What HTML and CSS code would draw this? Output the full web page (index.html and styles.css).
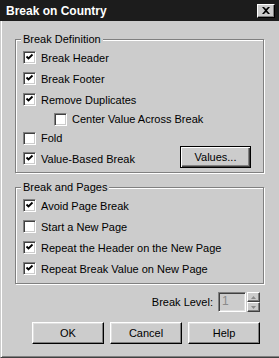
FILE: index.html
```html
<!DOCTYPE html>
<html lang="en">
<head>
    <meta charset="UTF-8">
    <title>Break on Country</title>
    <link rel="stylesheet" href="styles.css">
</head>
<body>
    <!-- Dialog window -->
    <div class="window">
        <div class="titlebar">
            <span class="title">Break on Country</span>
            <span class="close-btn">
                <svg width="8" height="7" viewBox="0 0 8 7"><path d="M0 0h2l2 2 2-2h2L5 3.5 8 7H6L4 5 2 7H0l3-3.5z" fill="#000"/></svg>
            </span>
        </div>

        <div class="content">
            <!-- Break definition group -->
            <fieldset class="group group-def">
                <legend>Break Definition</legend>
                <div class="row">
                    <span class="check"><svg viewBox="0 0 9 9"><polyline points="1.5,3.5 3.5,5.5 7.5,1.5"/></svg></span>
                    <span>Break Header</span>
                </div>
                <div class="row">
                    <span class="check"><svg viewBox="0 0 9 9"><polyline points="1.5,3.5 3.5,5.5 7.5,1.5"/></svg></span>
                    <span>Break Footer</span>
                </div>
                <div class="row">
                    <span class="check"><svg viewBox="0 0 9 9"><polyline points="1.5,3.5 3.5,5.5 7.5,1.5"/></svg></span>
                    <span>Remove Duplicates</span>
                </div>
                <div class="row row-sub">
                    <span class="check"></span>
                    <span>Center Value Across Break</span>
                </div>
                <div class="row row-fold">
                    <span class="check"></span>
                    <span>Fold</span>
                </div>
                <div class="row">
                    <span class="check"><svg viewBox="0 0 9 9"><polyline points="1.5,3.5 3.5,5.5 7.5,1.5"/></svg></span>
                    <span>Value-Based Break</span>
                    <span class="btn btn-default btn-values">Values...</span>
                </div>
            </fieldset>

            <!-- Break and pages group -->
            <fieldset class="group group-pages">
                <legend>Break and Pages</legend>
                <div class="row">
                    <span class="check"><svg viewBox="0 0 9 9"><polyline points="1.5,3.5 3.5,5.5 7.5,1.5"/></svg></span>
                    <span>Avoid Page Break</span>
                </div>
                <div class="row">
                    <span class="check"></span>
                    <span>Start a New Page</span>
                </div>
                <div class="row">
                    <span class="check"><svg viewBox="0 0 9 9"><polyline points="1.5,3.5 3.5,5.5 7.5,1.5"/></svg></span>
                    <span>Repeat the Header on the New Page</span>
                </div>
                <div class="row">
                    <span class="check"><svg viewBox="0 0 9 9"><polyline points="1.5,3.5 3.5,5.5 7.5,1.5"/></svg></span>
                    <span>Repeat Break Value on New Page</span>
                </div>
            </fieldset>

            <!-- Break level spinner -->
            <div class="level-row">
                <span>Break Level:</span>
                <span class="level-input">1</span>
                <span class="spinner">
                    <span class="spin-btn"><svg width="5" height="3" viewBox="0 0 5 3"><path d="M2.5 0L5 3H0z" fill="#8a8a8a"/></svg></span>
                    <span class="spin-btn"><svg width="5" height="3" viewBox="0 0 5 3"><path d="M0 0h5L2.5 3z" fill="#8a8a8a"/></svg></span>
                </span>
            </div>

            <!-- Dialog buttons -->
            <div class="button-row">
                <span class="btn">OK</span>
                <span class="btn">Cancel</span>
                <span class="btn">Help</span>
            </div>
        </div>
    </div>
</body>
</html>
```

FILE: styles.css
```css
/* Reset */
* {
    margin: 0;
    padding: 0;
    box-sizing: border-box;
}

body {
    margin: 0;
    background-color: #cccccc;
    font-family: "Liberation Sans", Arial, sans-serif;
    font-size: 11px;
    color: #000000;
}

/* Dialog frame */
.window {
    width: 279px;
    height: 358px;
    display: flex;
    flex-direction: column;
    background-color: #cccccc;
}

/* Title bar */
.titlebar {
    height: 21px;
    flex: none;
    display: flex;
    align-items: center;
    justify-content: space-between;
    padding: 0 4px 0 6px;
    background-color: #1c1c1c;
}

.title {
    color: #ffffff;
    font-size: 12px;
    font-weight: bold;
}

.close-btn {
    width: 18px;
    height: 14px;
    display: flex;
    align-items: center;
    justify-content: center;
    background-color: #cccccc;
    border: 1px solid;
    border-color: #ffffff #000000 #000000 #ffffff;
    box-shadow: inset -1px -1px 0 #808080;
}

.content {
    flex: 1;
    display: flex;
    flex-direction: column;
    border-left: 1px solid #cccccc;
    border-bottom: 1px solid #404040;
    box-shadow: inset 1px 0 0 #ffffff, inset 0 -1px 0 #808080;
}

/* Group boxes (etched) */
.group {
    margin: 12px 15px 0 14px;
    padding: 1px 0 3px 7px;
    border: 1px solid #808080;
    box-shadow: 1px 1px 0 #ffffff, inset 1px 1px 0 #ffffff;
}

.group legend {
    margin-left: -2px;
    padding: 0 2px;
    line-height: 13px;
    background-color: #cccccc;
}

.group-pages {
    margin-top: 8px;
    padding-bottom: 4px;
}

/* Checkbox rows */
.row {
    height: 21px;
    display: flex;
    align-items: center;
    gap: 5px;
}

.row-sub {
    height: 18px;
    padding-left: 31px;
}

.row-fold {
    height: 20px;
}

.check {
    width: 13px;
    height: 13px;
    flex: none;
    background-color: #ffffff;
    border: 1px solid;
    border-color: #808080 #ffffff #ffffff #808080;
    box-shadow: inset 1px 1px 0 #404040, inset -1px -1px 0 #cccccc;
    padding: 1px;
}

.check svg {
    display: block;
    width: 9px;
    height: 9px;
    fill: none;
    stroke: #000000;
    stroke-width: 1.8;
}

/* Push buttons */
.btn {
    width: 72px;
    height: 22px;
    display: flex;
    align-items: center;
    justify-content: center;
    background-color: #cccccc;
    border: 1px solid;
    border-color: #ffffff #000000 #000000 #ffffff;
    box-shadow: inset -1px -1px 0 #808080, inset 1px 1px 0 #dfdfdf;
}

.btn-default {
    border: 1px solid #000000;
    box-shadow: inset 1px 1px 0 #ffffff, inset -1px -1px 0 #404040, inset -2px -2px 0 #808080;
}

.btn-values {
    width: 71px;
    height: 22px;
    margin-left: auto;
    margin-right: 12px;
    margin-top: -4px;
}

/* Break level */
.level-row {
    margin-top: 8px;
    padding-right: 19px;
    display: flex;
    justify-content: flex-end;
    align-items: center;
    height: 20px;
}

.level-input {
    width: 28px;
    height: 20px;
    margin-left: 5px;
    padding: 1px 0 0 3px;
    color: #8a8a8a;
    font-size: 12px;
    border: 1px solid;
    border-color: #808080 #ffffff #ffffff #808080;
    box-shadow: inset 1px 1px 0 #404040, inset -1px -1px 0 #dfdfdf;
}

.spinner {
    width: 13px;
    height: 20px;
    margin-left: 1px;
    display: flex;
    flex-direction: column;
}

.spin-btn {
    flex: 1;
    display: flex;
    align-items: center;
    justify-content: center;
    border: 1px solid;
    border-color: #ffffff #404040 #404040 #ffffff;
    box-shadow: inset -1px -1px 0 #808080;
}

.spin-btn svg {
    display: block;
}

/* Dialog buttons */
.button-row {
    margin-top: 10px;
    padding-right: 19px;
    display: flex;
    justify-content: flex-end;
    gap: 6px;
}
```
